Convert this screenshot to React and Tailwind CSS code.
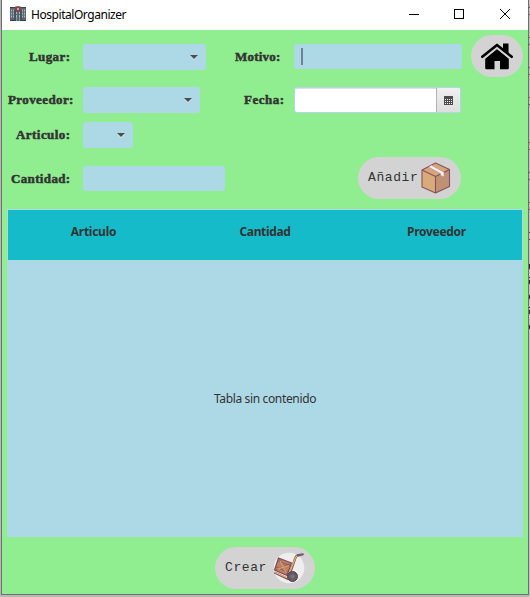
import React from 'react';

const labelBase =
  "shrink-0 whitespace-nowrap font-['Liberation_Serif',serif] text-[13px] leading-[26px] font-bold text-[#333333] [-webkit-text-stroke:0.5px_#333333]";

const pillText =
  "font-['Liberation_Mono',monospace] text-[13px] tracking-[0.6px] text-[#333333]";

function Label({ children, className }) {
  return <div className={`${labelBase} ${className}`}>{children}</div>;
}

function Combo({ className }) {
  return (
    <div className={`flex h-[26px] shrink-0 items-center justify-end rounded-[3px] bg-[#add8e6] pr-2 ${className}`}>
      <svg width="8" height="6" viewBox="0 0 8 6">
        <path d="M0 2h8L4 6z" fill="#d6ebf2" />
        <path d="M0 1h8L4 5z" fill="#4d4d4d" />
      </svg>
    </div>
  );
}

function HospitalIcon() {
  return (
    <svg width="16" height="16" viewBox="0 0 16 16">
      <path d="M0 1.500h5V0.500h6v1h5V15H0z" fill="#5a666e" />
      <path d="M0 1.500h5M11 1.500h5" stroke="#39444c" />
      <path d="M1.500 3.500v9M3.500 3.500v9M12.500 3.500v9M14.500 3.500v9M6.500 6v5M9.500 6v5" stroke="#a9b8c0" strokeDasharray="2 1" />
      <path d="M5 4v10M11 4v10M0 14.500h16" stroke="#343f47" />
      <path d="M6 11h4v4H6z" fill="#8299a6" />
      <path d="M8 11v4" stroke="#26313b" />
      <circle cx="8" cy="3" r="2.800" fill="#8b4347" />
      <path d="M8 2v2M7 3h2" stroke="#e0c9c9" />
    </svg>
  );
}

function HomeIcon() {
  return (
    <svg width="32" height="27" viewBox="0 0 32 27">
      <path d="M22 0.500h5.500v10L22 6z" fill="#000" />
      <path d="M4.200 15.500L16 6l11.800 9.500V25q0 1.300-1.300 1.300H19V18h-5.500v8.300h-8q-1.300 0-1.300-1.300z" fill="#000" />
      <path d="M3 15.700L16 5 29 15.700" fill="none" stroke="#d3d3d3" strokeWidth="1.500" />
      <path d="M1.300 13.800L16 1.900 30.700 13.800" fill="none" stroke="#000" strokeWidth="2.600" strokeLinecap="round" strokeLinejoin="round" />
    </svg>
  );
}

function BoxIcon() {
  return (
    <svg width="30" height="32" viewBox="0 0 30 32" strokeLinejoin="round">
      <path d="M1 8L14.500 1 28.500 7.500v17L14.500 31 1 25z" fill="#d9ab7b" />
      <path d="M14.500 14.500l14-7v17l-14 6.500z" fill="#bf9175" />
      <path d="M1 8L14.500 1l14 6.500-14 7z" fill="#d6a679" />
      <path d="M1 8L14.500 1l14 6.500v17L14.500 31 1 25zM1 8l13.500 6.500 14-7M14.500 14.500V31" fill="none" stroke="#865260" strokeWidth="1.100" />
      <path d="M7.500 5l3-1.700 12.500 7v4.700l-3.500-1.800v-1.700z" fill="#f6f1f6" stroke="#ad8290" strokeWidth="0.500" />
    </svg>
  );
}

function CartIcon() {
  return (
    <svg width="32" height="32" viewBox="0 0 32 32" strokeLinejoin="round">
      <circle cx="16" cy="16" r="15.300" fill="#eeeeee" />
      <path d="M5.500 6l13 5-4.500 12.500L1.500 18z" fill="#be8060" stroke="#79485a" strokeWidth="1.100" />
      <path d="M5 9l12.500 5M3 15l12 5M6.500 7l7 15M17 12L3 17.500" fill="none" stroke="#79485a" strokeWidth="0.700" />
      <path d="M7 9l6.500 12M16 13.500L4.500 17" fill="none" stroke="#dda171" strokeWidth="1.200" />
      <path d="M1.500 20.500l13.500 6.500L22.500 5.500q1-2.500 4-2.700" fill="none" stroke="#805361" strokeWidth="2.300" />
      <path d="M2 20.500l12.500 5.500L22.500 5.500q1-2.200 3.500-2.500" fill="none" stroke="#e7b36d" strokeWidth="1.200" />
      <path d="M25 3.300l4.700-1" stroke="#666070" strokeWidth="2.300" strokeLinecap="round" />
      <circle cx="19.500" cy="24.500" r="5" fill="#625963" stroke="#5b4053" />
      <circle cx="19.500" cy="24.500" r="2" fill="#777779" stroke="#77656f" strokeWidth="0.700" />
    </svg>
  );
}

function TitleBar() {
  return (
    <header className="flex h-[30px] shrink-0 bg-white">
      <div className="ml-2 mt-1.5 h-4 w-4"><HospitalIcon /></div>
      <h1 className="ml-[5px] font-['Noto_Sans',sans-serif] text-[12px] leading-[30px] tracking-[-0.45px] text-black">HospitalOrganizer</h1>
      <svg className="ml-auto mr-[17px] mt-2" width="102" height="12" viewBox="0 0 102 12" fill="none" stroke="#000" shapeRendering="crispEdges">
        <path d="M0 6.500h10M45.500 1.500h9v9h-9z" />
        <path d="M91 1l10 10M101 1L91 11" shapeRendering="auto" />
      </svg>
    </header>
  );
}

const columns = [
  { name: 'Articulo', width: 'w-[171px]', spacing: 'tracking-[-0.25px]' },
  { name: 'Cantidad', width: 'w-[172px]', spacing: 'tracking-[-0.35px]' },
  { name: 'Proveedor', width: 'w-[171px]', spacing: 'tracking-[-0.3px]' },
];

const dots = [0, 2, 4, 6];

function DateField() {
  return (
    <div className="flex h-[26px] w-[167px] shrink-0 overflow-hidden rounded-[3px] border border-[#add8e6] bg-white">
      <div className="flex-1 border-t border-[#dedede]" />
      <button className="flex w-6 items-center justify-center border-l border-[#b4b4b4] bg-linear-to-b from-[#f0f0f0] to-[#dedede]">
        <svg width="9" height="9" viewBox="0 0 9 9" shapeRendering="crispEdges">
          <path d="M0 0h9v9H0z" fill="#4d4d4d" />
          {dots.map((x) => [3, 5, 7].map((y) => (
            <rect key={`${x}-${y}`} x={x + 1} y={y} width="1" height="1" fill="#eeeeee" />
          )))}
        </svg>
      </button>
    </div>
  );
}

export default function App() {
  return (
    <div className="flex h-[597px] w-[530px] overflow-hidden bg-[#b8b8b8] pl-px">
      <div className="flex h-[595px] w-[528px] shrink-0 flex-col border-b border-l border-r border-[#6e6e6e] bg-[#90ee90]">
        <TitleBar />
        <div className="flex h-[179px] shrink-0">
          <div className="w-[460px] shrink-0 pt-3.5">
            <div className="flex h-[26px]">
              <Label className="w-[54px] pl-[27px] tracking-[0.4px]">Lugar:</Label>
              <Combo className="ml-[27px] w-[123px]" />
              <Label className="ml-[29px] w-[59px] tracking-[0.2px]">Motivo:</Label>
              <div className="flex h-[25px] w-[168px] items-center rounded-[3px] bg-[#add8e6] pl-[7px]">
                <div className="h-[17px] w-0.5 bg-[#71858d]" />
              </div>
            </div>
            <div className="mt-[17px] flex h-[26px]">
              <Label className="w-[81px] pl-[6px] tracking-[0.4px]">Proveedor:</Label>
              <Combo className="w-[117px]" />
              <Label className="ml-[43px] w-[51px] pl-px tracking-[0.5px]">Fecha:</Label>
              <DateField />
            </div>
            <div className="mt-[9px] flex h-[26px]">
              <Label className="w-[81px] pl-[14px] tracking-[0.45px]">Articulo:</Label>
              <Combo className="w-[50px]" />
            </div>
            <div className="mt-[9px] flex h-[42px] items-center">
              <Label className="w-[81px] pl-[9px] pt-px tracking-[0.35px]">Cantidad:</Label>
              <div className="h-[25px] w-[142px] rounded-[3px] bg-[#add8e6]" />
              <button className={`ml-[133px] flex h-[42px] w-[103px] items-center rounded-full bg-[#d3d3d3] pl-[10px] ${pillText}`}>
                Añadir
                <span className="ml-[3px] shrink-0"><BoxIcon /></span>
              </button>
            </div>
          </div>
          <button className="ml-[9px] mt-[5px] flex h-[42px] w-[52px] items-center justify-center rounded-full bg-[#d3d3d3]">
            <HomeIcon />
          </button>
        </div>
        <section className="ml-[5px] flex h-[328px] w-[516px] shrink-0 flex-col border border-[#add8e6] bg-[#add8e6] font-['Noto_Sans',sans-serif] text-[12px] text-[#333333]">
          <div className="flex h-[50px] shrink-0 bg-[#15bbc9]">
            {columns.map((column) => (
              <div key={column.name} className={`${column.width} ${column.spacing} pt-[13px] text-center leading-[18px] font-bold`}>{column.name}</div>
            ))}
          </div>
          <div className="flex flex-1 items-center justify-center pt-px tracking-[-0.35px]">Tabla sin contenido</div>
        </section>
        <button className={`ml-[213px] mt-2.5 flex h-[42px] w-[100px] shrink-0 items-center rounded-full bg-[#d3d3d3] pl-[10px] ${pillText}`}>
          Crear
          <span className="ml-[6px] shrink-0"><CartIcon /></span>
        </button>
      </div>
      <div className="relative w-px shrink-0 bg-[#c2c2c2]">
        <svg className="absolute top-0 left-0" width="1" height="350" viewBox="0 0 1 350" shapeRendering="crispEdges">
          <path d="M0 7h1v1H0zM0 14h1v1H0zM0 37h1v1H0zM0 44h1v1H0zM0 67h1v1H0zM0 74h1v1H0zM0 97h1v1H0zM0 104h1v1H0zM0 142h1v1H0zM0 149h1v1H0zM0 172h1v1H0zM0 179h1v1H0zM0 202h1v1H0zM0 209h1v1H0zM0 232h1v1H0zM0 239h1v1H0z" fill="#a42648" />
          <path d="M0 264h1v5H0zM0 277h1v1H0zM0 280h1v4H0zM0 295h1v4H0zM0 307h1v1H0zM0 310h1v4H0zM0 325h1v4H0z" fill="#2c2940" />
        </svg>
      </div>
    </div>
  );
}
